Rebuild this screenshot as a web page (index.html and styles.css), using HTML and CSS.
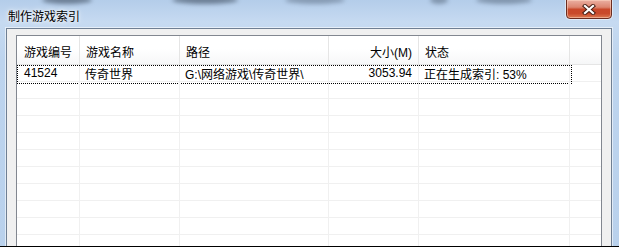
FILE: index.html
```html
<!DOCTYPE html>
<html lang="zh-CN">
  <head>
    <meta charset="UTF-8" />
    <title>制作游戏索引</title>
    <link rel="stylesheet" href="styles.css">
  </head>
  <body>
    <div class="window">
      <!-- blurred desktop showing through the glass -->
      <span class="smudge s1"></span>
      <span class="smudge s2"></span>
      <span class="smudge s3"></span>
      <span class="smudge s4"></span>
      <span class="smudge s5"></span>

      <div class="titlebar">
        <span class="title">制作游戏索引</span>
      </div>
      <button class="close" aria-label="关闭">
        <svg width="14" height="11" viewBox="0 0 14 11">
          <path d="M3 2 L11 9 M11 2 L3 9" stroke="#4a2016" stroke-width="4.2" stroke-linecap="square" fill="none" />
          <path d="M3 2 L11 9 M11 2 L3 9" stroke="#fff" stroke-width="2.2" stroke-linecap="square" fill="none" />
        </svg>
      </button>

      <div class="client">
        <div class="listview">
          <div class="row header">
            <div class="cell c1">游戏编号</div>
            <div class="cell c2">游戏名称</div>
            <div class="cell c3">路径</div>
            <div class="cell c4 num">大小(M)</div>
            <div class="cell c5">状态</div>
            <div class="cell c6"></div>
          </div>
          <div class="row focused">
            <div class="cell c1">41524</div>
            <div class="cell c2">传奇世界</div>
            <div class="cell c3">G:\网络游戏\传奇世界\</div>
            <div class="cell c4 num">3053.94</div>
            <div class="cell c5">正在生成索引: 53%</div>
            <div class="cell c6"></div>
          </div>
          <div class="row"><div class="cell c1"></div><div class="cell c2"></div><div class="cell c3"></div><div class="cell c4"></div><div class="cell c5"></div><div class="cell c6"></div></div>
          <div class="row"><div class="cell c1"></div><div class="cell c2"></div><div class="cell c3"></div><div class="cell c4"></div><div class="cell c5"></div><div class="cell c6"></div></div>
          <div class="row"><div class="cell c1"></div><div class="cell c2"></div><div class="cell c3"></div><div class="cell c4"></div><div class="cell c5"></div><div class="cell c6"></div></div>
          <div class="row"><div class="cell c1"></div><div class="cell c2"></div><div class="cell c3"></div><div class="cell c4"></div><div class="cell c5"></div><div class="cell c6"></div></div>
          <div class="row"><div class="cell c1"></div><div class="cell c2"></div><div class="cell c3"></div><div class="cell c4"></div><div class="cell c5"></div><div class="cell c6"></div></div>
          <div class="row"><div class="cell c1"></div><div class="cell c2"></div><div class="cell c3"></div><div class="cell c4"></div><div class="cell c5"></div><div class="cell c6"></div></div>
          <div class="row"><div class="cell c1"></div><div class="cell c2"></div><div class="cell c3"></div><div class="cell c4"></div><div class="cell c5"></div><div class="cell c6"></div></div>
          <div class="row"><div class="cell c1"></div><div class="cell c2"></div><div class="cell c3"></div><div class="cell c4"></div><div class="cell c5"></div><div class="cell c6"></div></div>
          <div class="row"><div class="cell c1"></div><div class="cell c2"></div><div class="cell c3"></div><div class="cell c4"></div><div class="cell c5"></div><div class="cell c6"></div></div>
          <div class="row"><div class="cell c1"></div><div class="cell c2"></div><div class="cell c3"></div><div class="cell c4"></div><div class="cell c5"></div><div class="cell c6"></div></div>
        </div>
      </div>
    </div>
  </body>
</html>
```

FILE: styles.css
```css
* {
  box-sizing: border-box;
}

body {
  margin: 0;
  overflow: hidden;
  font-family: "Liberation Sans", "Noto Sans CJK SC", sans-serif;
  font-size: 12px;
  color: #000;
}

.window {
  position: relative;
  width: 619px;
  height: 247px;
  display: flex;
  flex-direction: column;
  padding: 0 7px 0 6px;
  background: linear-gradient(#b4cdea, #c6daf1 22px, #bdd4ee 60px, #b9d1ec);
  border-bottom: 1px solid #000;
  overflow: hidden;
}

/* glass blur */
.smudge {
  position: absolute;
  top: -4px;
  height: 8px;
  border-radius: 50%;
  background: #4f5f73;
  filter: blur(2px);
  opacity: 0.7;
}

.s1 { left: 42px; width: 50px; }
.s2 { left: 172px; width: 66px; }
.s3 { left: 285px; width: 60px; opacity: 0.45; }
.s4 { left: 430px; width: 18px; opacity: 0.5; }
.s5 { left: 476px; width: 56px; opacity: 0.5; }

.titlebar {
  flex-shrink: 0;
  height: 28px;
  display: flex;
  align-items: center;
  padding: 2px 0 0 2px;
}

.title {
  font-family: "Noto Sans CJK SC", sans-serif;
  font-size: 12px;
  text-shadow: 0 0 6px #fff, 0 0 3px #fff;
}

.close {
  position: absolute;
  top: -1px;
  left: 566px;
  width: 46px;
  height: 20px;
  padding: 0;
  display: flex;
  align-items: center;
  justify-content: center;
  border: 1px solid #6b2c20;
  border-radius: 0 0 4px 4px;
  background: linear-gradient(#ebb0a2, #dc8570 40%, #c9482a 52%, #c94a2b 75%, #dc7a52);
  box-shadow: inset 0 0 0 1px rgba(255, 220, 200, 0.5), 0 0 0 1px rgba(255, 255, 255, 0.5);
}

.close svg {
  display: block;
}

.client {
  flex: 1;
  min-height: 0;
  background: #f0f0f0;
  border: 1px solid #6f7f93;
  border-bottom: none;
  padding: 6px 9px 0;
  box-shadow: 0 0 0 1px rgba(255, 255, 255, 0.55);
}

.listview {
  height: 100%;
  background: #fff;
  border: 1px solid #828790;
  border-bottom: none;
  overflow: hidden;
}

.row {
  position: relative;
  display: flex;
  flex-shrink: 0;
  height: 17px;
  border-bottom: 1px solid #f0f0f0;
}

.row.header {
  height: 29px;
  background: linear-gradient(#fff, #fff 45%, #f6f7f8);
  border-bottom: 1px solid #e5e5e5;
}

.cell {
  display: flex;
  align-items: center;
  padding: 0 5px;
  border-right: 1px solid #f0f0f0;
  white-space: nowrap;
  overflow: hidden;
}

.header .cell {
  padding-top: 3px;
  padding-left: 6px;
  border-right-color: #e5e5e5;
}

.cell.num {
  justify-content: flex-end;
  padding-right: 6px;
}

.c1 { width: 63px; padding-left: 7px; }
.c2 { width: 100px; }
.c3 { width: 149px; }
.c4 { width: 90px; }
.c5 { width: 151px; }
.c6 { flex: 1; border-right: none; }

.header .c1 { padding-left: 7px; }

.focused::after {
  content: "";
  position: absolute;
  left: 0;
  top: 0;
  width: 553px;
  height: 17px;
  border: 1px dotted #000;
}
```
